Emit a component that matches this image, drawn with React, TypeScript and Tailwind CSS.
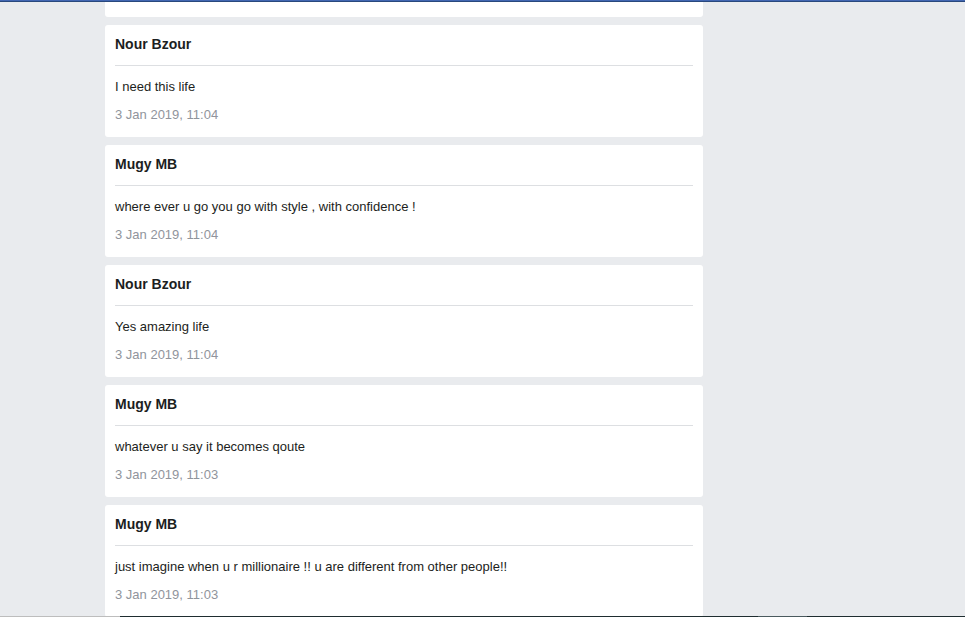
const comments = [
  { name: 'Nour Bzour', text: 'I need this life', date: '3 Jan 2019, 11:04' },
  { name: 'Mugy MB', text: 'where ever u go you go with style , with confidence !', date: '3 Jan 2019, 11:04' },
  { name: 'Nour Bzour', text: 'Yes amazing life', date: '3 Jan 2019, 11:04' },
  { name: 'Mugy MB', text: 'whatever u say it becomes qoute', date: '3 Jan 2019, 11:03' },
  { name: 'Mugy MB', text: 'just imagine when u r millionaire !! u are different from other people!!', date: '3 Jan 2019, 11:03' },
];

function CommentCard({ name, text, date }: { name: string; text: string; date: string }) {
  return (
    <div className="bg-white rounded-[3px] h-[112px] px-[10px] pt-[9px] shrink-0">
      <div className="text-[14px] leading-[20px] font-bold text-[#1c1e21] pb-[11px] border-b border-[#dddfe2]">
        {name}
      </div>
      <div className="text-[13px] leading-[20px] text-[#1c1e21] pt-[11px]">{text}</div>
      <div className="text-[13px] leading-[20px] text-[#90949c] mt-[8px]">{date}</div>
    </div>
  );
}

export default function App() {
  return (
    <div
      className="relative h-[617px] w-[965px] overflow-hidden bg-[#e9ebee]"
      style={{ fontFamily: '"Liberation Sans", Arial, sans-serif' }}
    >
      <div className="absolute top-0 left-0 right-0 z-10">
        <div className="h-px bg-[#4267b2]" />
        <div className="h-px bg-[#29487d]" />
      </div>

      <div className="ml-[105px] w-[598px] flex flex-col gap-[8px]">
        {/* tail of the previous comment, scrolled off the top */}
        <div className="bg-white rounded-b-[3px] h-[17px] shrink-0" />
        {comments.map((c, i) => (
          <CommentCard key={i} {...c} />
        ))}
      </div>

      <div className="absolute bottom-0 left-0 right-0 h-px flex z-10">
        <div className="w-[120px] bg-[#bdbdbd]" />
        <div className="w-[638px] bg-[#1f2d30]" />
        <div className="w-[49px] bg-[#4a5a5e]" />
        <div className="flex-1 bg-[#1f2d30]" />
      </div>
    </div>
  );
}
